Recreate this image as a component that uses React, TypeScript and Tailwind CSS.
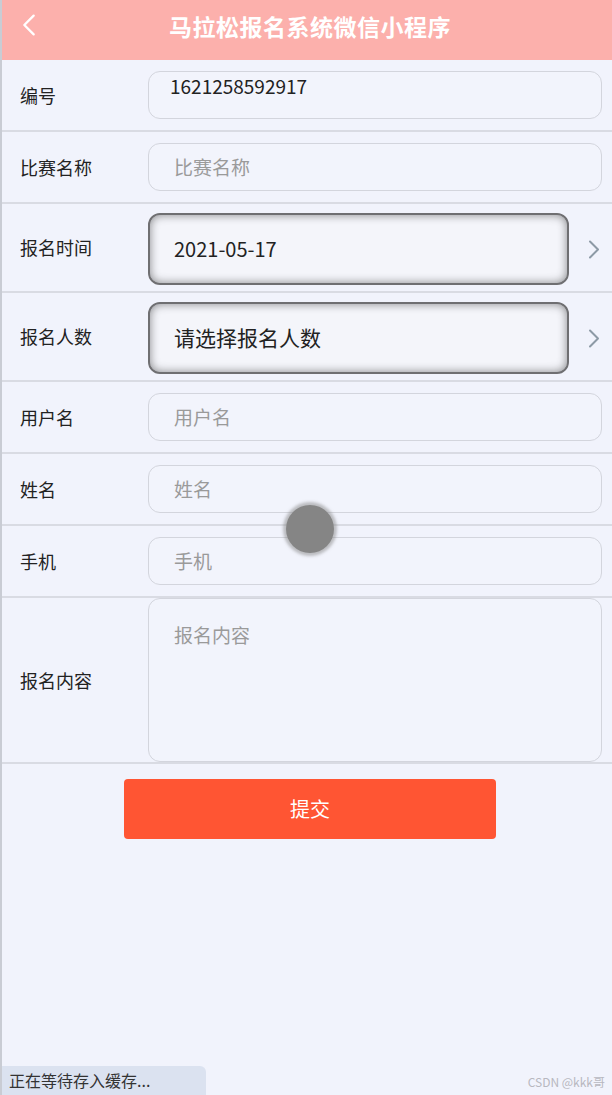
import React from "react";

const FONT = { fontFamily: '"Noto Sans CJK SC", "Noto Sans", sans-serif' };

function Chevron({ className, back }: { className?: string; back?: boolean }) {
  return (
    <svg viewBox="0 0 12 20" className={className} fill="none" stroke="currentColor" strokeWidth="2" strokeLinecap="round" strokeLinejoin="round">
      <path d={back ? "M10 2 L2 10 L10 18" : "M2 2 L10 10 L2 18"} />
    </svg>
  );
}

function TextRow({ label, placeholder, value }: { label: string; placeholder: string; value?: string }) {
  return (
    <div className="flex items-center h-[72px] border-b-2 border-[#d9dbe3]">
      <div className="w-[146px] pl-[18px] text-[18px] text-[#222]">{label}</div>
      <div className="flex-1 mr-[10px] h-12 rounded-xl border border-[#d3d5dd] bg-[#f2f4fc] flex">
        {value ? (
          <span className="pl-[21px] pt-[1px] text-[19px] text-[#222] leading-[26px]">{value}</span>
        ) : (
          <span className="pl-[25px] self-center text-[19px] text-[#9a9a9a]">{placeholder}</span>
        )}
      </div>
    </div>
  );
}

function PickerRow({ label, text, size }: { label: string; text: string; size: string }) {
  return (
    <div className="flex items-center h-[89px] border-b-2 border-[#d9dbe3]">
      <div className="w-[146px] pl-[18px] text-[18px] text-[#222]">{label}</div>
      <div className="w-[421px] h-[72px] mt-[3px] rounded-xl border-2 border-[#6f6f72] bg-[#f4f5fa] shadow-[inset_0_0_10px_rgba(0,0,0,0.45)] flex items-center">
        <span className={`pl-6 text-[#222] ${size}`}>{text}</span>
      </div>
      <Chevron className="ml-[19px] mt-[3px] w-[12px] h-[21px] text-[#8d9aa6]" />
    </div>
  );
}

export default function App() {
  return (
    <div style={FONT} className="relative min-h-[1095px] flex flex-col bg-[#f1f3fc] border-l-2 border-[#c9ccd4]">
      {/* Header */}
      <div className="relative h-[60px] bg-[#fcb0ac] flex items-center justify-center">
        <Chevron back className="absolute left-[20px] top-[12px] w-[14px] h-[26px] text-white" />
        <span className="text-white font-bold text-[23px] tracking-[0.5px] pb-[8px] pl-[6px]">马拉松报名系统微信小程序</span>
      </div>

      <TextRow label="编号" placeholder="" value="1621258592917" />
      <TextRow label="比赛名称" placeholder="比赛名称" />
      <PickerRow label="报名时间" text="2021-05-17" size="text-[20px]" />
      <PickerRow label="报名人数" text="请选择报名人数" size="text-[21px]" />
      <TextRow label="用户名" placeholder="用户名" />
      <TextRow label="姓名" placeholder="姓名" />
      <TextRow label="手机" placeholder="手机" />

      <div className="flex items-center h-[166px] border-b-2 border-[#d9dbe3]">
        <div className="w-[146px] pl-[18px] text-[18px] text-[#222]">报名内容</div>
        <div className="flex-1 mr-[10px] h-[164px] rounded-xl border border-[#d3d5dd] bg-[#f2f4fc] pl-[25px] pt-[22px] text-[19px] text-[#9a9a9a]">
          报名内容
        </div>
      </div>

      <div className="flex justify-center pt-[15px] pl-[6px]">
        <button className="w-[372px] h-[60px] rounded-[4px] bg-[#ff5533] text-white text-[20px]">提交</button>
      </div>

      <div className="flex-1" />

      <div className="flex items-end justify-between">
        <div className="w-[204px] h-[29px] rounded-tr-md bg-[#dbe2f0] pl-[7px] text-[16px] text-[#333] leading-[29px]">
          正在等待存入缓存...
        </div>
        <div className="pr-[7px] pb-[4px] text-[12px] text-[#b8b8c0]">CSDN @kkk哥</div>
      </div>

      {/* touch indicator */}
      <div className="absolute left-[284px] top-[505px] w-[48px] h-[48px] rounded-full bg-[#858585] shadow-[0_0_3px_3px_rgba(133,133,133,0.5)]" />
    </div>
  );
}
